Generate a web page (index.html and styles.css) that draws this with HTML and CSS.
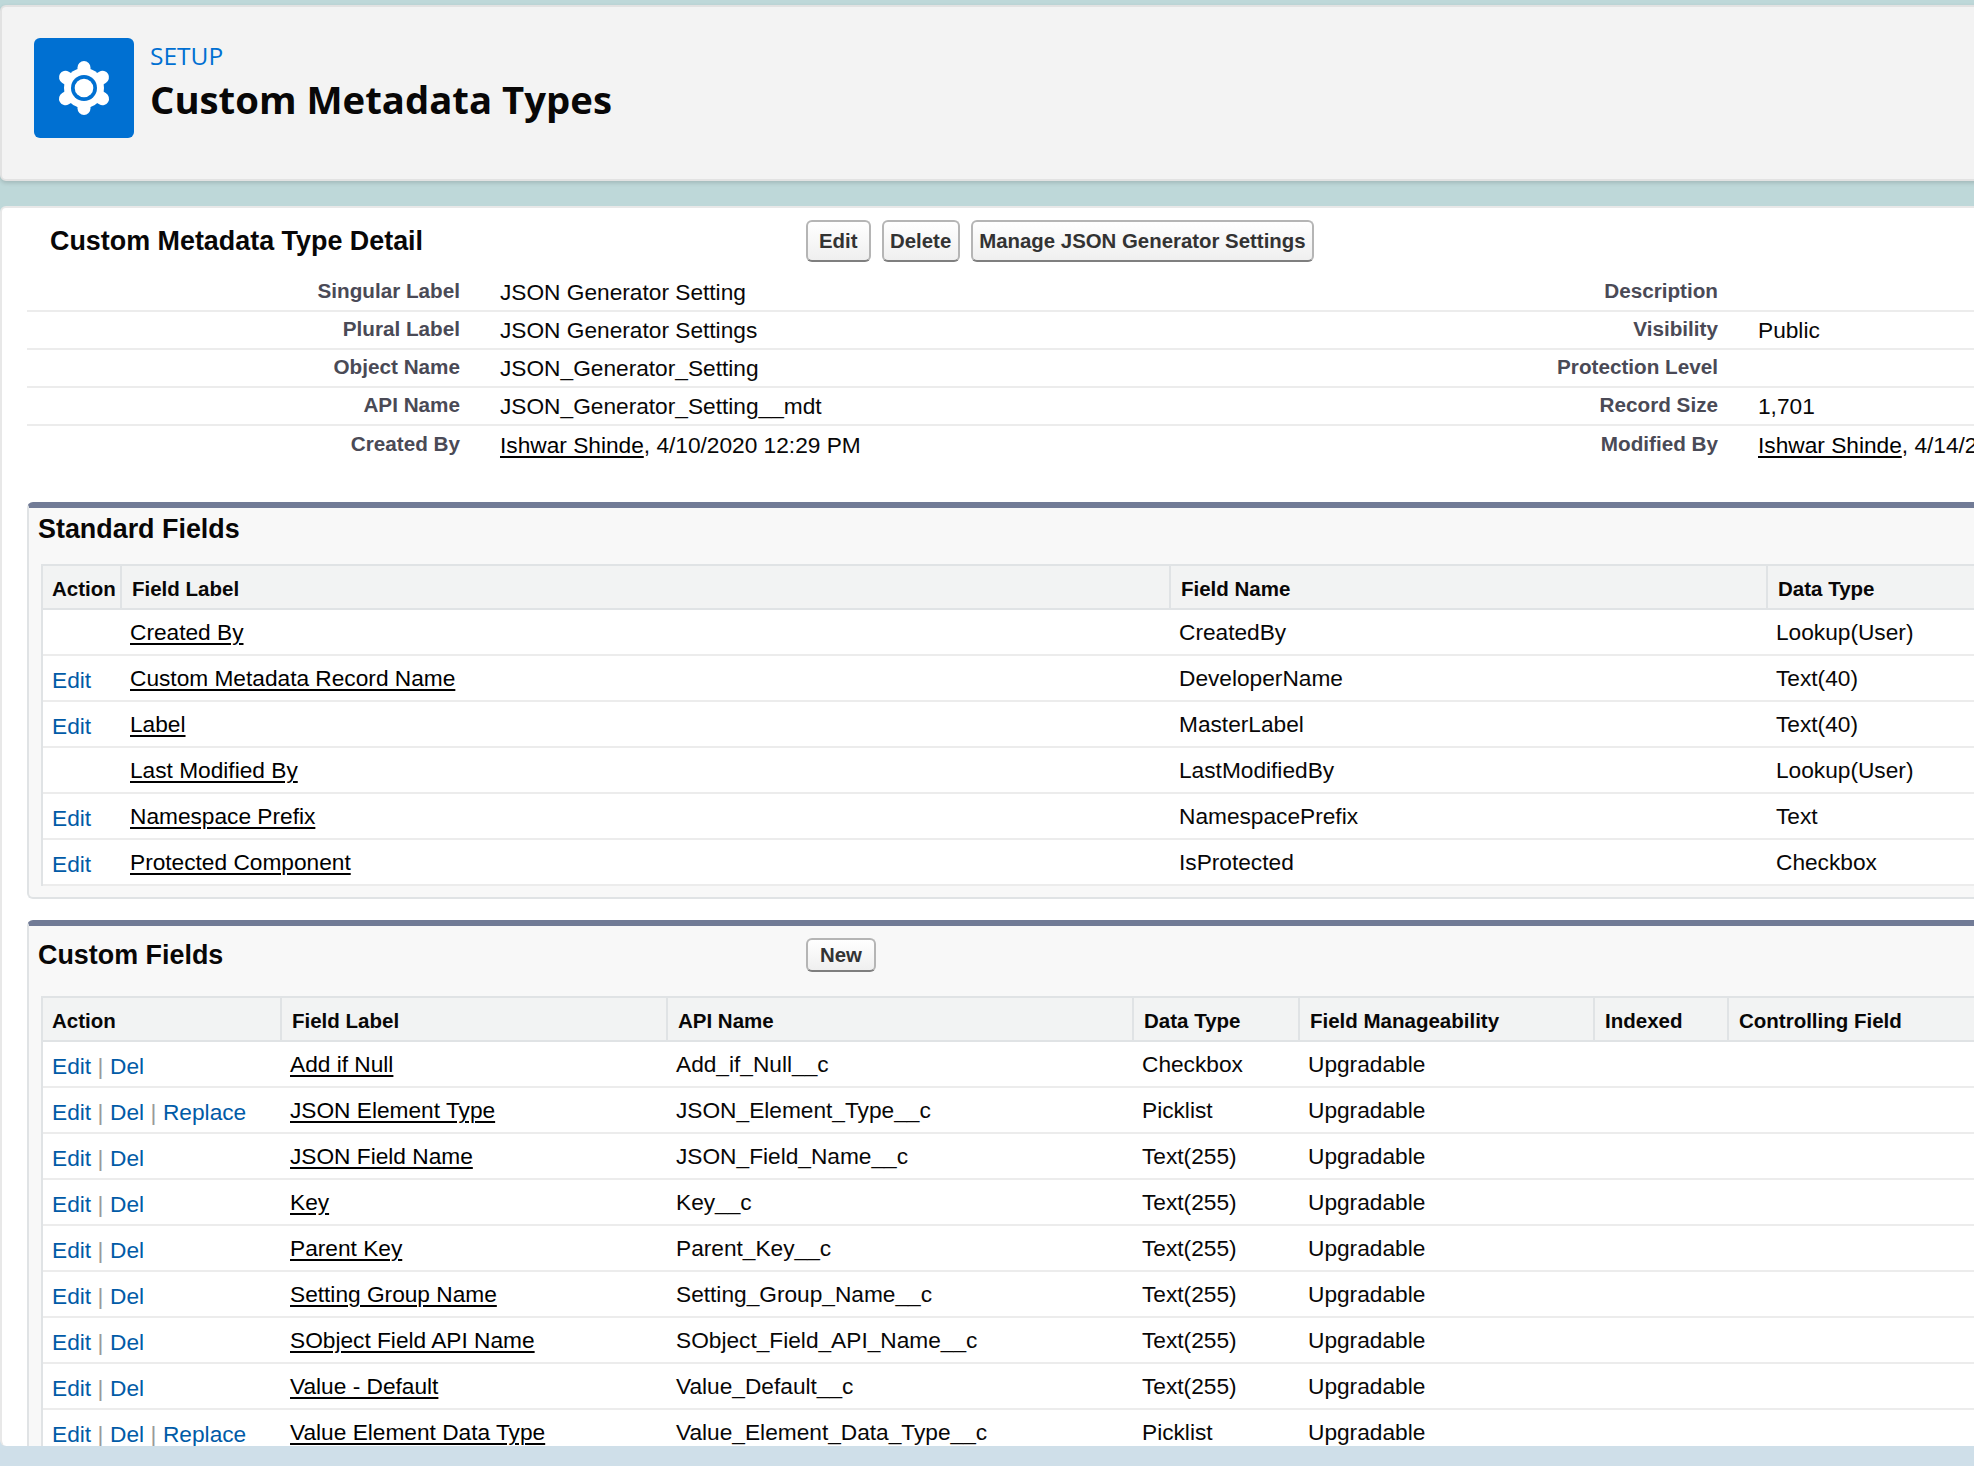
FILE: index.html
```html
<!DOCTYPE html>
<html lang="en">
<head>
    <meta charset="UTF-8">
    <title>Custom Metadata Types</title>
    <link rel="stylesheet" href="styles.css">
</head>
<body>
    <div class="page">
        <header class="page-header">
            <div class="header-icon">
                <svg width="100" height="100" viewBox="0 0 100 100">
                    <g stroke="#fff" stroke-width="13" stroke-linecap="round">
                        <line x1="50" y1="50" x2="50" y2="29.5"/>
                        <line x1="50" y1="50" x2="50" y2="70.5"/>
                        <line x1="50" y1="50" x2="68.5" y2="39.3"/>
                        <line x1="50" y1="50" x2="31.5" y2="39.3"/>
                        <line x1="50" y1="50" x2="68.5" y2="60.7"/>
                        <line x1="50" y1="50" x2="31.5" y2="60.7"/>
                    </g>
                    <circle cx="50" cy="50" r="20" fill="#fff"/>
                    <circle cx="50" cy="50" r="13" fill="#0070d2"/>
                    <circle cx="50" cy="50" r="9.3" fill="#fff"/>
                </svg>
            </div>
            <div class="header-text">
                <div class="header-setup">SETUP</div>
                <h1>Custom Metadata Types</h1>
            </div>
        </header>

        <main class="panel">
            <div class="detail-top">
                <h2 class="detail-title">Custom Metadata Type Detail</h2>
                <div class="btn-row">
                    <button class="btn btn-short">Edit</button>
                    <button class="btn">Delete</button>
                    <button class="btn">Manage JSON Generator Settings</button>
                </div>
            </div>

            <table class="detail-table">
                <colgroup>
                    <col class="d-label1"><col class="d-data1"><col class="d-label2"><col>
                </colgroup>
                <tr>
                    <th>Singular Label</th><td>JSON Generator Setting</td>
                    <th>Description</th><td></td>
                </tr>
                <tr>
                    <th>Plural Label</th><td>JSON Generator Settings</td>
                    <th>Visibility</th><td>Public</td>
                </tr>
                <tr>
                    <th>Object Name</th><td>JSON_Generator_Setting</td>
                    <th>Protection Level</th><td></td>
                </tr>
                <tr>
                    <th>API Name</th><td>JSON_Generator_Setting__mdt</td>
                    <th>Record Size</th><td>1,701</td>
                </tr>
                <tr>
                    <th>Created By</th><td><a href="#">Ishwar Shinde</a>, 4/10/2020 12:29 PM</td>
                    <th>Modified By</th><td><a href="#">Ishwar Shinde</a>, 4/14/2020 10:12 AM</td>
                </tr>
            </table>

            <section class="block block-standard">
                <h3 class="block-title">Standard Fields</h3>
                <table class="list std-list">
                    <colgroup>
                        <col class="s-action"><col class="s-label"><col class="s-name"><col>
                    </colgroup>
                    <tr><th>Action</th><th>Field Label</th><th>Field Name</th><th>Data Type</th></tr>
                    <tr><td class="action"></td><td><a href="#">Created By</a></td><td>CreatedBy</td><td>Lookup(User)</td></tr>
                    <tr><td class="action"><a class="act" href="#">Edit</a></td><td><a href="#">Custom Metadata Record Name</a></td><td>DeveloperName</td><td>Text(40)</td></tr>
                    <tr><td class="action"><a class="act" href="#">Edit</a></td><td><a href="#">Label</a></td><td>MasterLabel</td><td>Text(40)</td></tr>
                    <tr><td class="action"></td><td><a href="#">Last Modified By</a></td><td>LastModifiedBy</td><td>Lookup(User)</td></tr>
                    <tr><td class="action"><a class="act" href="#">Edit</a></td><td><a href="#">Namespace Prefix</a></td><td>NamespacePrefix</td><td>Text</td></tr>
                    <tr><td class="action"><a class="act" href="#">Edit</a></td><td><a href="#">Protected Component</a></td><td>IsProtected</td><td>Checkbox</td></tr>
                </table>
            </section>

            <section class="block block-custom">
                <div class="block-head">
                    <h3 class="block-title">Custom Fields</h3>
                    <button class="btn btn-new">New</button>
                </div>
                <table class="list custom-list">
                    <colgroup>
                        <col class="c-action"><col class="c-label"><col class="c-api"><col class="c-type"><col class="c-manage"><col class="c-indexed"><col>
                    </colgroup>
                    <tr><th>Action</th><th>Field Label</th><th>API Name</th><th>Data Type</th><th>Field Manageability</th><th>Indexed</th><th>Controlling Field</th></tr>
                    <tr><td class="action"><a class="act" href="#">Edit</a><span class="sep">|</span><a class="act" href="#">Del</a></td><td><a href="#">Add if Null</a></td><td>Add_if_Null__c</td><td>Checkbox</td><td>Upgradable</td><td></td><td></td></tr>
                    <tr><td class="action"><a class="act" href="#">Edit</a><span class="sep">|</span><a class="act" href="#">Del</a><span class="sep">|</span><a class="act" href="#">Replace</a></td><td><a href="#">JSON Element Type</a></td><td>JSON_Element_Type__c</td><td>Picklist</td><td>Upgradable</td><td></td><td></td></tr>
                    <tr><td class="action"><a class="act" href="#">Edit</a><span class="sep">|</span><a class="act" href="#">Del</a></td><td><a href="#">JSON Field Name</a></td><td>JSON_Field_Name__c</td><td>Text(255)</td><td>Upgradable</td><td></td><td></td></tr>
                    <tr><td class="action"><a class="act" href="#">Edit</a><span class="sep">|</span><a class="act" href="#">Del</a></td><td><a href="#">Key</a></td><td>Key__c</td><td>Text(255)</td><td>Upgradable</td><td></td><td></td></tr>
                    <tr><td class="action"><a class="act" href="#">Edit</a><span class="sep">|</span><a class="act" href="#">Del</a></td><td><a href="#">Parent Key</a></td><td>Parent_Key__c</td><td>Text(255)</td><td>Upgradable</td><td></td><td></td></tr>
                    <tr><td class="action"><a class="act" href="#">Edit</a><span class="sep">|</span><a class="act" href="#">Del</a></td><td><a href="#">Setting Group Name</a></td><td>Setting_Group_Name__c</td><td>Text(255)</td><td>Upgradable</td><td></td><td></td></tr>
                    <tr><td class="action"><a class="act" href="#">Edit</a><span class="sep">|</span><a class="act" href="#">Del</a></td><td><a href="#">SObject Field API Name</a></td><td>SObject_Field_API_Name__c</td><td>Text(255)</td><td>Upgradable</td><td></td><td></td></tr>
                    <tr><td class="action"><a class="act" href="#">Edit</a><span class="sep">|</span><a class="act" href="#">Del</a></td><td><a href="#">Value - Default</a></td><td>Value_Default__c</td><td>Text(255)</td><td>Upgradable</td><td></td><td></td></tr>
                    <tr><td class="action"><a class="act" href="#">Edit</a><span class="sep">|</span><a class="act" href="#">Del</a><span class="sep">|</span><a class="act" href="#">Replace</a></td><td><a href="#">Value Element Data Type</a></td><td>Value_Element_Data_Type__c</td><td>Picklist</td><td>Upgradable</td><td></td><td></td></tr>
                </table>
            </section>
        </main>
    </div>
</body>
</html>
```

FILE: styles.css
```css
* {
    box-sizing: border-box;
}
html, body {
    margin: 0;
    height: 100%;
    overflow: hidden;
}
body {
    font-family: "Liberation Sans", Arial, sans-serif;
    font-size: 22.7px;
    color: #080707;
    background: linear-gradient(#bed8d9 0, #bed8d9 300px, #cfdfe9 1400px);
}
.page {
    width: 2300px;
    padding-top: 5px;
}
a {
    color: #000;
    text-decoration-thickness: 2px;
    text-underline-offset: 3px;
}

/* header */
.page-header {
    display: flex;
    align-items: flex-start;
    height: 176px;
    padding: 31px 34px;
    background: #f3f3f3;
    border: 2px solid #e2e2e2;
    border-radius: 6px;
    box-shadow: 0 2px 4px rgba(0, 0, 0, 0.15);
}
.header-icon {
    width: 100px;
    height: 100px;
    margin-left: -2px;
    background: #0070d2;
    border-radius: 6px;
}
.header-icon svg {
    display: block;
}
.header-text {
    margin-left: 16px;
    font-family: "Open Sans", sans-serif;
}
.header-setup {
    font-size: 24.5px;
    line-height: 34px;
    margin-top: 1px;
    color: #0070d2;
}
h1 {
    margin: 1px 0 0;
    font-size: 38.3px;
    line-height: 50px;
    font-weight: 700;
    color: #080707;
}

/* main panel */
.panel {
    height: 1240px;
    margin-top: 25px;
    background: #fff;
    border: 2px solid #e8e8e8;
    border-bottom: none;
    border-radius: 6px;
    overflow: hidden;
}
.detail-top {
    display: flex;
    padding: 12px 0 12px 48px;
}
.detail-title {
    width: 756px;
    margin: 0;
    font-size: 26.9px;
    line-height: 42px;
}
.btn-row {
    display: flex;
    gap: 11px;
}
.btn {
    height: 42px;
    padding: 0 6.5px;
    font-family: inherit;
    font-size: 20.4px;
    font-weight: bold;
    color: #333;
    background: linear-gradient(#fff, #efefef);
    border: 2px solid #b5b5b5;
    border-bottom-color: #7f7f7f;
    border-radius: 6px;
}
.btn-short {
    padding: 0 11px;
}
.btn-new {
    height: 34px;
    padding: 0 12px;
}

/* detail table */
.detail-table {
    width: 2250px;
    margin-left: 25px;
    table-layout: fixed;
    border-collapse: separate;
    border-spacing: 0;
}
.d-label1 { width: 443px; }
.d-data1 { width: 900px; }
.d-label2 { width: 358px; }
.detail-table th,
.detail-table td {
    height: 38px;
    padding: 0 10px 0 30px;
    border-bottom: 2px solid #ececec;
    white-space: nowrap;
}
.detail-table th {
    padding-bottom: 2px;
    text-align: right;
    font-size: 20.7px;
    color: #4a4a56;
}
.detail-table tr:last-child th,
.detail-table tr:last-child td {
    border-bottom: none;
}

/* related lists */
.block {
    width: 2260px;
    margin-left: 25px;
    padding: 0 0 11px 12px;
    background: #f8f8f8;
    border-top: 6px solid #717b96;
    border-left: 2px solid #e0e3e5;
    border-bottom: 2px solid #e0e3e5;
    border-radius: 6px;
}
.block-standard {
    margin-top: 38px;
}
.block-custom {
    margin-top: 21px;
}
.block-title {
    margin: 0 0 0 -3px;
    font-size: 26.9px;
    line-height: 40px;
}
.block-standard .block-title {
    height: 56px;
    line-height: 42px;
}
.block-head {
    display: flex;
    align-items: flex-start;
    height: 70px;
    padding-top: 12px;
}
.block-head .block-title {
    width: 768px;
    line-height: 34px;
}
.list {
    width: 2240px;
    table-layout: fixed;
    border-collapse: separate;
    border-spacing: 0;
    background: #fff;
    border-top: 2px solid #e0e3e5;
    border-left: 2px solid #e0e3e5;
}
.list th {
    height: 44px;
    padding: 3px 10px 0;
    text-align: left;
    font-size: 20.5px;
    background: #f2f3f3;
    border-bottom: 2px solid #e0e3e5;
    border-left: 2px solid #e0e3e5;
    white-space: nowrap;
}
.list th:first-child {
    border-left: none;
}
.list td {
    height: 46px;
    padding: 1px 10px 0;
    border-bottom: 2px solid #ececec;
    white-space: nowrap;
}
.list th:first-child,
.list td.action {
    padding-left: 9px;
}
.list td.action {
    padding-top: 5px;
}
.s-action { width: 77px; }
.s-label { width: 1049px; }
.s-name { width: 597px; }
.c-action { width: 237px; }
.c-label { width: 386px; }
.c-api { width: 466px; }
.c-type { width: 166px; }
.c-manage { width: 295px; }
.c-indexed { width: 134px; }
a.act {
    color: #015ba7;
    text-decoration: none;
}
.sep {
    margin: 0 6.5px;
    color: #999;
}
```
